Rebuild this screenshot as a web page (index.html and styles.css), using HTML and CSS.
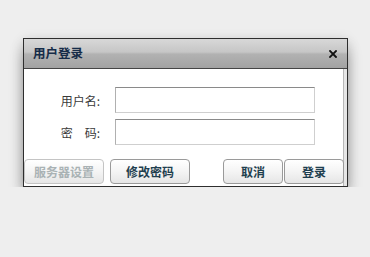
FILE: index.html
```html
<!DOCTYPE html>
<html lang="zh">
<head>
<meta charset="utf-8">
<title>用户登录</title>
<link rel="stylesheet" href="styles.css">
</head>
<body>
<div class="dialog">
  <div class="header">
    <span class="title">用户登录</span>
    <svg class="close" width="8" height="8" viewBox="0 0 8 8"><path d="M1 1 L7 7 M7 1 L1 7" stroke="#111" stroke-width="1.8" stroke-linecap="square"/></svg>
  </div>
  <div class="body">
    <div class="form">
      <label class="label">用户名:</label>
      <div class="input"></div>
      <label class="label">密　码:</label>
      <div class="input"></div>
    </div>
    <div class="buttons">
      <div class="group">
        <button class="btn wide disabled">服务器设置</button>
        <button class="btn wide">修改密码</button>
      </div>
      <div class="group tight">
        <button class="btn">取消</button>
        <button class="btn">登录</button>
      </div>
    </div>
  </div>
</div>
</body>
</html>
```
FILE: styles.css
```css
html, body {
  margin: 0;
  padding: 0;
  background: #eeeeee;
  font-family: "Noto Sans CJK SC", "Liberation Sans", sans-serif;
  font-size: 12px;
}
body {
  padding: 38px 0 0 23px;
}
.dialog {
  width: 323px;
  height: 147px;
  border: 1px solid #2e2e2e;
  background: #e6e6e6;
  box-shadow: 0 10px 14px -2px rgba(0, 0, 0, 0.42), 0 2px 12px rgba(0, 0, 0, 0.12);
  display: flex;
  flex-direction: column;
}
.header {
  height: 29px;
  border-bottom: 1px solid #444;
  background: linear-gradient(#d8d8d8, #c6c6c6 45%, #b2b2b2 52%, #a2a2a2);
  display: flex;
  align-items: center;
  justify-content: space-between;
  padding: 0 10px 0 9px;
}
.title {
  font-weight: bold;
  font-size: 12.5px;
  color: #162c48;
  line-height: 1;
}
.close {
  display: block;
}
.body {
  flex: 1;
  background: #fff;
  margin-right: 3px;
  border-right: 1px solid #b8b8b8;
  display: flex;
  flex-direction: column;
}
.form {
  display: grid;
  grid-template-columns: 76px 200px;
  column-gap: 15px;
  row-gap: 6px;
  padding-top: 18px;
  align-items: center;
}
.label {
  text-align: right;
  color: #3a3a3a;
  font-size: 12px;
}
.input {
  height: 24px;
  border: 1px solid #cfcfcf;
  border-top-color: #8a8a8a;
  border-left-color: #b0b0b0;
  background: #fff;
}
.buttons {
  display: flex;
  justify-content: space-between;
  margin-top: 14px;
  margin-right: -1px;
}
.group {
  display: flex;
  gap: 6px;
}
.group.tight {
  gap: 1px;
}
.btn {
  width: 60px;
  height: 25px;
  padding: 0;
  border: 1px solid #9a9a9a;
  border-radius: 4px;
  background: linear-gradient(#ffffff, #f4f4f4 50%, #e6e6e6);
  font-family: "Noto Sans CJK SC", "Liberation Sans", sans-serif;
  font-size: 12px;
  font-weight: bold;
  color: #1f3f4f;
}
.btn.wide {
  width: 80px;
}
.btn.disabled {
  color: #a9b2b4;
  border-color: #c4c4c4;
}
```
